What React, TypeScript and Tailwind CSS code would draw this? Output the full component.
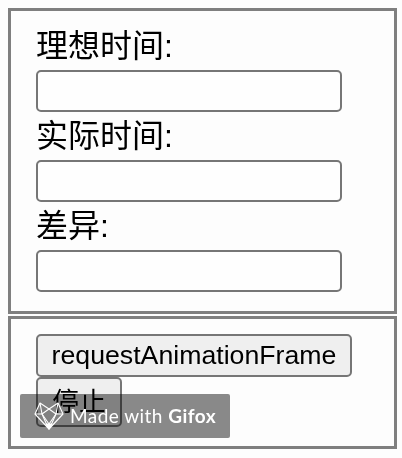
const cjk = "font-['Liberation_Sans','Noto_Sans_CJK_SC',sans-serif]"

const Field = ({ label }: { label: string }) => (
  <div>
    <div className="h-[48px] text-[32px] leading-[48px] text-black">{label}</div>
    <div className="h-[42px] w-[306px] rounded-[5px] border-2 border-[#767676] bg-[#fefefe]"></div>
  </div>
)

const FoxLogo = () => (
  <svg width="30" height="28" viewBox="0 0 30 28" fill="none" stroke="#ffffff" strokeWidth="1.1" strokeLinejoin="round" className="shrink-0">
    <path d="M6 1 L15 7 L24 1 L29 12 L15 27 L1 12 Z" />
    <path d="M6 1 L8 12 L1 12 M24 1 L22 12 L29 12 M15 7 L8 12 L15 22 L22 12 Z" />
    <path d="M8 12 L12 21 L15 27 L18 21 L22 12" />
    <path d="M15 27 L12 22 L18 22 Z" fill="#ffffff" />
  </svg>
)

const App = () => {
  return (
    <div className={`relative h-[458px] w-[402px] overflow-hidden bg-[#fdfdfd] px-2 pt-2 ${cjk}`}>
      <div className="h-[306px] w-[389px] border-[3px] border-[#7f7f7f] pl-[25px] pt-[11px]">
        <Field label="理想时间:" />
        <Field label="实际时间:" />
        <Field label="差异:" />
      </div>

      <div className="mt-[2px] h-[133px] w-[389px] border-[3px] border-[#7f7f7f] pt-[15px] pl-[25px]">
        <button className="block h-[43px] w-[316px] rounded-[5px] border-2 border-[#767676] bg-[#efefef] text-center text-[26.7px] leading-none text-black">
          requestAnimationFrame
        </button>
        <button className="block h-[50px] w-[86px] rounded-[5px] border-2 border-[#767676] bg-[#efefef] text-center text-[26.7px] leading-none text-black">
          停止
        </button>
      </div>

      {/* watermark: the tint multiplies so the button text under it stays black */}
      <div className="absolute top-[394px] left-[20px] h-[44px] w-[210px]">
        <div className="absolute inset-0 rounded-[2px] bg-[#8a8a8a] mix-blend-multiply"></div>
        <div className="relative flex h-full items-center gap-[6px] pl-[14px] text-white">
          <FoxLogo />
          <span className="font-['Lato',sans-serif] text-[19px] tracking-[0.45px] whitespace-nowrap">
            Made with <span className="font-bold">Gifox</span>
          </span>
        </div>
      </div>
    </div>
  )
}

export default App
